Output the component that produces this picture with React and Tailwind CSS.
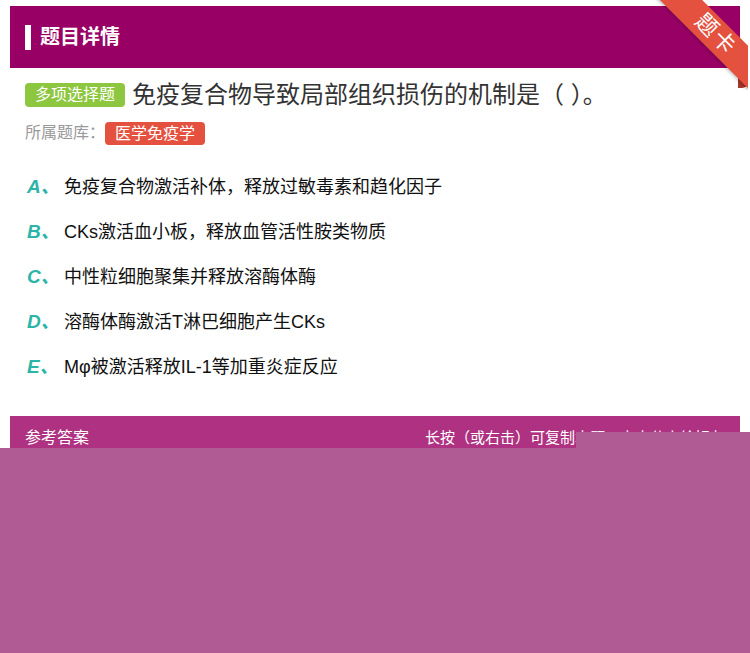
import React from "react";

const options = [
  { key: "A", text: "免疫复合物激活补体，释放过敏毒素和趋化因子" },
  { key: "B", text: "CKs激活血小板，释放血管活性胺类物质" },
  { key: "C", text: "中性粒细胞聚集并释放溶酶体酶" },
  { key: "D", text: "溶酶体酶激活T淋巴细胞产生CKs" },
  { key: "E", text: "Mφ被激活释放IL-1等加重炎症反应" },
];

const font = { fontFamily: '"Liberation Sans", "Noto Sans CJK SC", sans-serif' };

export default function App() {
  return (
    <div className="relative w-[750px] h-[653px] bg-white overflow-hidden" style={font}>
      {/* header */}
      <div className="mx-[10px] mt-[6px] h-[62px] bg-[#990066] flex items-center px-[15px]">
        <div className="w-[6px] h-[25px] bg-white mr-[9px]" />
        <span className="text-white text-[20px] font-bold leading-none">题目详情</span>
      </div>

      {/* ribbon */}
      <div className="absolute top-0 right-[2px] w-[95px] h-[90px] overflow-hidden">
        <div className="absolute right-0 top-[66px] w-[10px] h-[22px] bg-[#a8362b] rounded-br-[6px]" />
        <div className="absolute left-[-6px] top-[21px] w-[140px] h-[30px] bg-[#e4513f] rotate-45 flex items-center justify-center shadow-[0_2px_3px_rgba(0,0,0,0.2)]">
          <span className="text-white text-[22px] leading-none tracking-[2px] pr-[4px]">题卡</span>
        </div>
      </div>

      {/* question */}
      <div className="mt-[15px] px-[25px] flex items-center">
        <span className="h-[24px] px-[10px] rounded-[4px] bg-[#8dc63f] text-white text-[16px] leading-[24px]">
          多项选择题
        </span>
        <span className="ml-[7px] text-[24px] leading-[24px] text-[#333]">
          免疫复合物导致局部组织损伤的机制是（ ）。
        </span>
      </div>

      <div className="mt-[14px] px-[25px] flex items-center">
        <span className="text-[16px] text-[#999]">所属题库：</span>
        <span className="h-[23px] px-[10px] rounded-[4px] bg-[#e4513f] text-white text-[16px] leading-[23px]">
          医学免疫学
        </span>
      </div>

      {/* options */}
      <div className="mt-[20px] px-[27px]">
        {options.map((o) => (
          <div key={o.key} className="h-[45px] flex items-center">
            <span className="w-[37px] text-[19px] font-bold italic text-[#2bb5a8]">{o.key}、</span>
            <span className="text-[18px] text-[#111]">{o.text}</span>
          </div>
        ))}
      </div>

      {/* answer bar */}
      <div className="mx-[10px] mt-[26px] h-[44px] bg-[#ae3281] flex items-center justify-between px-[15px] text-white">
        <span className="text-[16px]">参考答案</span>
        <span className="text-[15px]">长按（或右击）可复制本题，点击分享给好友</span>
      </div>

      {/* overlay */}
      <div className="absolute left-[576px] right-0 top-[432px] h-[16px] bg-[#b05b94]" />
      <div className="absolute left-0 right-0 top-[448px] bottom-0 bg-[#b05b94]" />
    </div>
  );
}
